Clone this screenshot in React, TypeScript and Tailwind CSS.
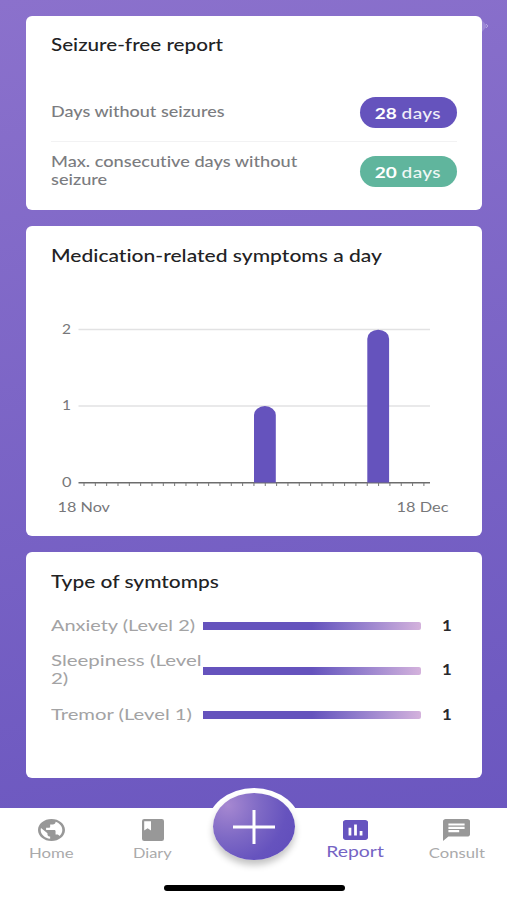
import type { ReactNode } from "react";
import { MdChat, MdPoll, MdPublic } from "react-icons/md";

const ticks = Array.from({ length: 31 }, (_, i) => 58 + i * 11.33);

const symptoms = [
  { lines: ["Anxiety (Level 2)"], scale: "scale-x-[1.285]", count: 1 },
  { lines: ["Sleepiness (Level", "2)"], scale: "scale-x-[1.32]", count: 1 },
  { lines: ["Tremor (Level 1)"], scale: "scale-x-[1.305]", count: 1 },
];

// Wide text: the type is drawn extended horizontally from its left edge
function Wide({
  className,
  children,
}: {
  className: string;
  children: ReactNode;
}) {
  return (
    <span className={`inline-block origin-left whitespace-nowrap ${className}`}>
      {children}
    </span>
  );
}

function Card({
  className,
  children,
}: {
  className: string;
  children: ReactNode;
}) {
  return (
    <section
      className={`flex w-[456px] flex-col rounded-[6px] bg-white pr-[25.5px] pl-[25px] ${className}`}
    >
      {children}
    </section>
  );
}

function CardTitle({
  className,
  children,
}: {
  className: string;
  children: ReactNode;
}) {
  return (
    <h2 className="text-[17px] leading-[24px] font-medium text-[#222224]">
      <Wide className={className}>{children}</Wide>
    </h2>
  );
}

function DaysBadge({ days, className }: { days: number; className: string }) {
  return (
    <div
      className={`flex h-[31px] w-[97px] items-center justify-center rounded-full pt-px text-[16px] text-white ${className}`}
    >
      <span className="inline-block scale-x-[1.19] whitespace-nowrap">
        <b className="font-bold">{days}</b>{" "}
        <span className="tracking-[0.3px] opacity-90">days</span>
      </span>
    </div>
  );
}

function SymptomsChart() {
  return (
    <svg width="456" height="230" className="mt-[32px] -ml-[25px] block">
      <g fill="#77777a" fontSize="14">
        <text x="36" y="34" textLength="9" lengthAdjust="spacingAndGlyphs">
          2
        </text>
        <text x="36" y="110" textLength="9" lengthAdjust="spacingAndGlyphs">
          1
        </text>
        <text x="36" y="187" textLength="9.5" lengthAdjust="spacingAndGlyphs">
          0
        </text>
        <text
          x="31.5"
          y="211.5"
          fontSize="13.5"
          textLength="52.5"
          lengthAdjust="spacingAndGlyphs"
        >
          18 Nov
        </text>
        <text
          x="370.5"
          y="211.5"
          fontSize="13.5"
          textLength="52"
          lengthAdjust="spacingAndGlyphs"
        >
          18 Dec
        </text>
      </g>
      <path d="M52.5 29.5H404M52.5 106H404" stroke="#e2e2e3" strokeWidth="1.4" />
      <path d="M52.5 182.7H404" stroke="#6d6d6d" strokeWidth="1.5" />
      {ticks.map((x) => (
        <path key={x} d={`M${x} 183v3`} stroke="#777" strokeWidth="1" />
      ))}
      <g fill="#6553bd">
        <path d="M228 182.5V115a10.9 9 0 0 1 21.8 0v67.5z" />
        <path d="M341.3 182.5V38.7a10.9 9 0 0 1 21.8 0v143.8z" />
      </g>
    </svg>
  );
}

function TabItem({
  className,
  children,
}: {
  className: string;
  children: ReactNode;
}) {
  return (
    <div className={`flex w-[101px] flex-col items-center ${className}`}>
      {children}
    </div>
  );
}

function TabBar() {
  return (
    <nav className="relative flex h-[92px] w-full bg-white pl-[1px] text-[13px] leading-[16px] text-[#aaaaab]">
      <TabItem className="pt-[11px]">
        <MdPublic
          viewBox="2 2 20 20"
          preserveAspectRatio="none"
          className="h-[22px] w-[27px] text-[#989898]"
        />
        <span className="mt-[4px] inline-block scale-x-[1.29]">Home</span>
      </TabItem>
      <TabItem className="pt-[11px]">
        <svg
          viewBox="0 0 22 22"
          preserveAspectRatio="none"
          className="h-[22px] w-[22px]"
        >
          <rect width="22" height="22" rx="2.2" fill="#989898" />
          <path d="M2.2 2.2h6.8v9.3l-3.4-2.3-3.4 2.3z" fill="#fff" />
        </svg>
        <span className="mt-[4px] inline-block scale-x-[1.26]">Diary</span>
      </TabItem>
      <div className="w-[102px] shrink-0" />
      <TabItem className="pt-[12px] text-[#7564c4]">
        <MdPoll
          viewBox="3 3 18 18"
          preserveAspectRatio="none"
          className="h-[20px] w-[25px] text-[#6654bf]"
        />
        <span className="mt-[3px] inline-block scale-x-[1.25] text-[15.5px]">
          Report
        </span>
      </TabItem>
      <TabItem className="pt-[11px]">
        <MdChat
          viewBox="2 2 20 20"
          preserveAspectRatio="none"
          className="h-[22px] w-[27px] text-[#989898]"
        />
        <span className="mt-[4px] inline-block scale-x-[1.28]">Consult</span>
      </TabItem>

      <button className="absolute -top-[20px] left-[207px] flex h-[77px] w-[94px] items-center justify-center rounded-[50%] bg-white">
        <span className="flex h-[67px] w-[82px] items-center justify-center rounded-[50%] bg-[radial-gradient(circle_at_18%_18%,#a688d1_0%,#7e69c5_38%,#6653be_68%,#5f4cbb_100%)] shadow-[0_5px_7px_rgba(0,0,0,0.24)]">
          <svg width="42" height="34">
            <path d="M0 17h42M21 0v34" stroke="#fff" strokeWidth="3" />
          </svg>
        </span>
      </button>
      <div className="absolute top-[77px] left-[163.5px] h-[6px] w-[181px] rounded-full bg-black" />
    </nav>
  );
}

export default function App() {
  return (
    <div className="flex h-[900px] w-[507px] flex-col overflow-hidden bg-linear-170 from-[#8b71cc] to-[#6854be] font-[Lato,sans-serif] [font-variant-ligatures:none]">
      <main className="relative flex h-[808px] flex-col items-center pt-[15.5px] pl-[1px]">
        {/* tip of the header illustration peeking out behind the card */}
        <svg
          width="9"
          height="14"
          className="absolute top-[19px] left-[480px]"
          fill="none"
        >
          <path d="M1 0l6 7-6 7z" fill="#9c88d5" />
          <path d="M6 5l2 2-2 2" stroke="#b3a3e0" />
        </svg>

        <Card className="relative h-[194.5px] pt-[17px]">
          <CardTitle className="scale-x-[1.215]">Seizure-free report</CardTitle>
          <div className="mt-[27px] flex h-[57px] items-center justify-between text-[15px] font-medium text-[#7b7c80]">
            <Wide className="scale-x-[1.2] pb-[2px]">
              Days without seizures
            </Wide>
            <DaysBadge days={28} className="bg-[#6553bd]" />
          </div>
          <div className="flex h-[61px] items-center justify-between border-t border-[#f2f2f3] text-[15px] leading-[18px] font-medium text-[#7b7c80]">
            <div className="flex flex-col items-start pb-[4px]">
              <Wide className="scale-x-[1.21]">
                Max. consecutive days without
              </Wide>
              <Wide className="scale-x-[1.21]">seizure</Wide>
            </div>
            <DaysBadge days={20} className="bg-[#60b59d]" />
          </div>
        </Card>

        <Card className="mt-[16px] h-[309.5px] pt-[18px]">
          <CardTitle className="scale-x-[1.238]">
            Medication-related symptoms a day
          </CardTitle>
          <SymptomsChart />
        </Card>

        <Card className="mt-[16.5px] h-[226px] pt-[18px]">
          <CardTitle className="scale-x-[1.23]">Type of symtomps</CardTitle>
          <ul className="mt-[10px]">
            {symptoms.map((s) => (
              <li key={s.lines[0]} className="flex h-[44.5px] items-center">
                <div className="flex w-[152px] flex-col items-start pb-[3px] text-[15.5px] leading-[18px] text-[#a3a3a4]">
                  {s.lines.map((line) => (
                    <Wide key={line} className={s.scale}>
                      {line}
                    </Wide>
                  ))}
                </div>
                <div className="h-[8px] w-[218px] rounded-r-[2px] bg-linear-to-r from-[#6553bd] from-50% to-[#d4b2dc]" />
                <Wide className="ml-[21px] scale-x-[1.05] pb-[3px] text-[16px] font-bold text-[#29292b]">
                  {s.count}
                </Wide>
              </li>
            ))}
          </ul>
        </Card>
      </main>
      <TabBar />
    </div>
  );
}
